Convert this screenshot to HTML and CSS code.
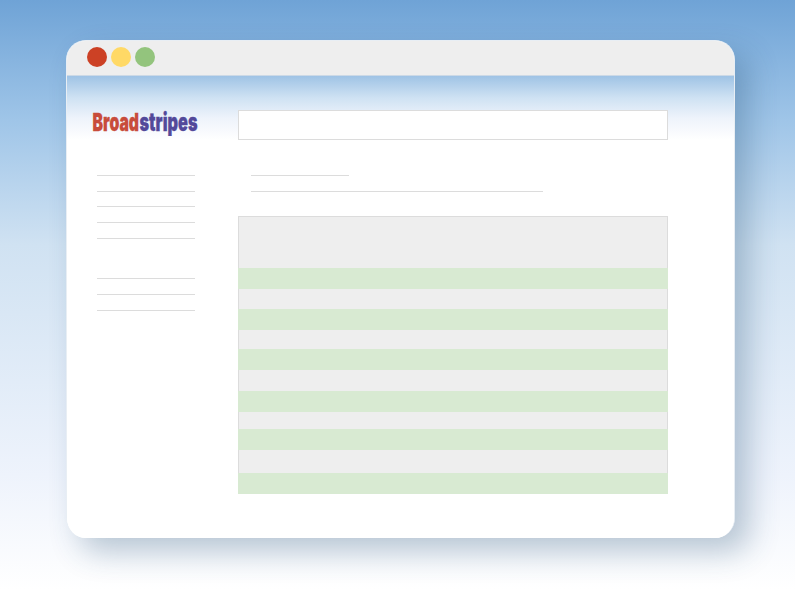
FILE: index.html
```html
<!DOCTYPE html>
<html lang="en">
<head>
<meta charset="utf-8">
<title>Broadstripes</title>
<link rel="stylesheet" href="styles.css">
</head>
<body>
<main class="window">
  <header class="titlebar"><i class="dot red"></i><i class="dot yellow"></i><i class="dot green"></i></header>
  <div class="content">
    <aside class="sidebar">
      <svg class="logo" width="110" height="32" viewBox="0 0 110 32" role="img" aria-label="Broadstripes">
        <text class="logo-red" x="1.5" y="24" textLength="46.5" lengthAdjust="spacingAndGlyphs">Broad</text>
        <text class="logo-blue" x="48.5" y="24" textLength="58" lengthAdjust="spacingAndGlyphs">stripes</text>
      </svg>
      <nav class="links">
        <hr><hr><hr class="tight"><hr><hr><hr class="group"><hr><hr>
      </nav>
    </aside>
    <section class="main">
      <div class="search"></div>
      <div class="summary"><hr class="short"><hr></div>
      <div class="table">
        <div class="stripe"></div><div></div><div class="stripe"></div><div></div><div class="stripe"></div><div></div><div class="stripe"></div><div></div><div class="stripe"></div><div></div><div class="stripe"></div>
      </div>
    </section>
  </div>
</main>
</body>
</html>
```
FILE: styles.css
```css
* { box-sizing: border-box; }
body {
  margin: 0;
  height: 602px;
  padding: 40px 60px 64px 66px;
  overflow: hidden;
  background: linear-gradient(#6fa3d6 0, #9fc5e8 120px, #d0e2f2 245px, #eef3fc 475px, #fff 590px);
}
.window {
  height: 498px;
  border: 1px solid #e8eef4;
  border-bottom: 0;
  border-radius: 20px;
  overflow: hidden;
  background: #fff;
  box-shadow: 14px 14px 30px rgba(35, 80, 115, .3);
}
.titlebar {
  display: flex;
  gap: 4px;
  height: 35px;
  padding: 6px 0 0 20px;
  background: #eee;
  border-bottom: 1px solid #ccd9e6;
}
.dot { width: 20px; height: 20px; border-radius: 50%; }
.red { background: #cc4125; }
.yellow { background: #ffd966; }
.green { background: #93c47d; }
.content {
  display: flex;
  height: 462px;
  background: linear-gradient(#9fc3e5 0, #cfe2f3 22px, #eef3fb 42px, #fff 64px);
}
.sidebar { width: 171px; padding: 31px 0 0 24px; }
.logo { display: block; overflow: visible; }
.logo text {
  font-family: Inter, "DejaVu Sans Condensed", sans-serif;
  font-size: 25px;
  font-weight: 900;
  stroke-width: .3;
}
.logo .logo-red { fill: #c84c3b; stroke: #c84c3b; }
.logo .logo-blue { fill: #53499a; stroke: #53499a; }
hr { height: 1px; margin: 0 0 15px; border: 0; background: #dcdcdc; }
.links { width: 98px; margin: 36px 0 0 6px; }
.links .tight { margin-top: -1px; }
.links .group { margin-top: 39px; }
.main { width: 430px; padding-top: 34px; }
.search { height: 30px; border: 1px solid #dcdcdc; background: #fff; }
.summary { width: 292px; margin: 35px 0 0 13px; }
.summary .short { width: 98px; }
.summary hr:last-child { margin-bottom: 24px; }
.table {
  display: grid;
  grid-template-rows: 21px 20px 21px 19px 21px 21px 21px 17px 21px 23px 21px;
  height: 278px;
  padding-top: 51px;
  border: 1px solid #dcdcdc;
  border-bottom: 0;
  background: #eee;
}
.stripe { margin: 0 -1px; background: #d8ead2; }
```
